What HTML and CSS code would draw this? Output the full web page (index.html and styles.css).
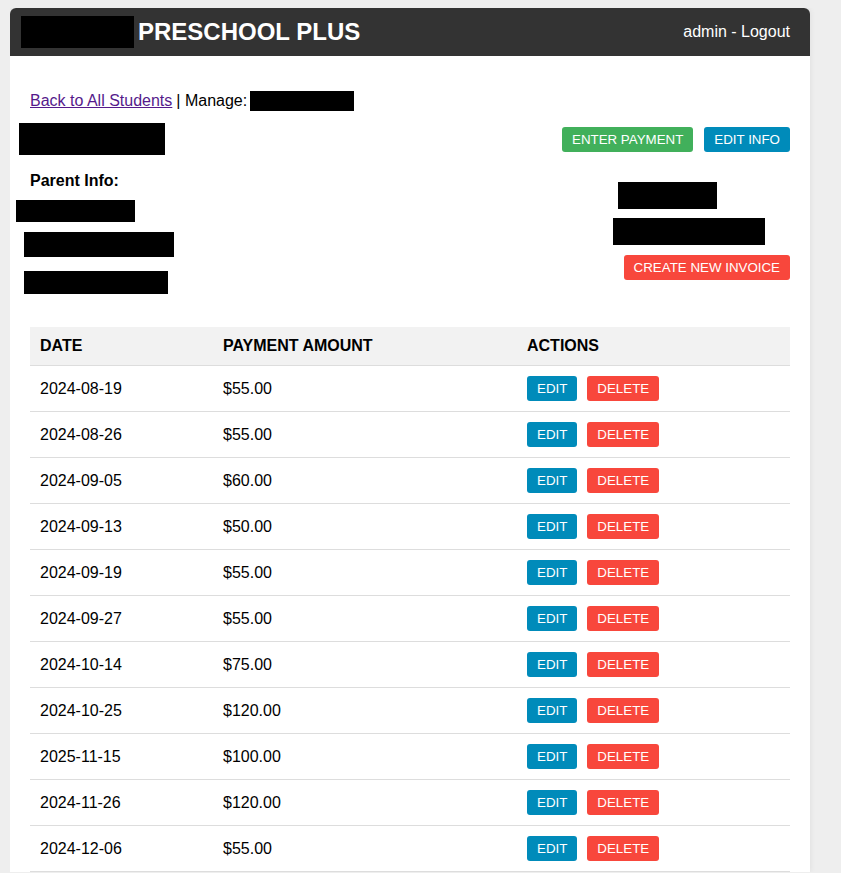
FILE: index.html
```html
<!DOCTYPE html>
<html lang="en">
<head>
<meta charset="utf-8">
<title>Preschool Plus - Manage Student</title>
<link rel="stylesheet" href="styles.css">
</head>
<body>
<div class="container">
  <header class="topbar">
    <h1 class="brand"><span class="redact brand-redact"></span>PRESCHOOL PLUS</h1>
    <div class="user">admin - <a class="logout" href="#">Logout</a></div>
  </header>
  <main class="content">
    <p class="nav"><a class="back" href="#">Back to All Students</a> | Manage: <span class="redact nav-redact"></span></p>
    <div class="name-row">
      <div class="redact name-redact"></div>
      <div class="btn-group">
        <button class="btn btn-green">ENTER PAYMENT</button>
        <button class="btn btn-blue">EDIT INFO</button>
      </div>
    </div>
    <div class="info">
      <div class="info-left">
        <p class="label">Parent Info:</p>
        <div class="redact pl1"></div>
        <div class="redact pl2"></div>
        <div class="redact pl3"></div>
      </div>
      <div class="info-right">
        <div class="redact pr1"></div>
        <div class="redact pr2"></div>
        <button class="btn btn-red invoice">CREATE NEW INVOICE</button>
      </div>
    </div>
    <table class="payments">
      <colgroup>
        <col class="c-date"><col class="c-amt"><col class="c-act">
      </colgroup>
      <thead>
        <tr><th>DATE</th><th>PAYMENT AMOUNT</th><th>ACTIONS</th></tr>
      </thead>
      <tbody>
        <tr><td>2024-08-19</td><td>$55.00</td><td><div class="actions"><button class="btn btn-blue">EDIT</button><button class="btn btn-red">DELETE</button></div></td></tr>
        <tr><td>2024-08-26</td><td>$55.00</td><td><div class="actions"><button class="btn btn-blue">EDIT</button><button class="btn btn-red">DELETE</button></div></td></tr>
        <tr><td>2024-09-05</td><td>$60.00</td><td><div class="actions"><button class="btn btn-blue">EDIT</button><button class="btn btn-red">DELETE</button></div></td></tr>
        <tr><td>2024-09-13</td><td>$50.00</td><td><div class="actions"><button class="btn btn-blue">EDIT</button><button class="btn btn-red">DELETE</button></div></td></tr>
        <tr><td>2024-09-19</td><td>$55.00</td><td><div class="actions"><button class="btn btn-blue">EDIT</button><button class="btn btn-red">DELETE</button></div></td></tr>
        <tr><td>2024-09-27</td><td>$55.00</td><td><div class="actions"><button class="btn btn-blue">EDIT</button><button class="btn btn-red">DELETE</button></div></td></tr>
        <tr><td>2024-10-14</td><td>$75.00</td><td><div class="actions"><button class="btn btn-blue">EDIT</button><button class="btn btn-red">DELETE</button></div></td></tr>
        <tr><td>2024-10-25</td><td>$120.00</td><td><div class="actions"><button class="btn btn-blue">EDIT</button><button class="btn btn-red">DELETE</button></div></td></tr>
        <tr><td>2025-11-15</td><td>$100.00</td><td><div class="actions"><button class="btn btn-blue">EDIT</button><button class="btn btn-red">DELETE</button></div></td></tr>
        <tr><td>2024-11-26</td><td>$120.00</td><td><div class="actions"><button class="btn btn-blue">EDIT</button><button class="btn btn-red">DELETE</button></div></td></tr>
        <tr><td>2024-12-06</td><td>$55.00</td><td><div class="actions"><button class="btn btn-blue">EDIT</button><button class="btn btn-red">DELETE</button></div></td></tr>
      </tbody>
    </table>
  </main>
</div>
</body>
</html>
```

FILE: styles.css
```css
html, body {
  background: #eeeeee;
}
body {
  margin: 8px 10px;
  font-family: "Liberation Sans", Arial, sans-serif;
  font-size: 16px;
  color: #000;
}
.container {
  width: 800px;
  background: #fff;
  border-radius: 6px 6px 0 0;
  box-shadow: 0 0 6px rgba(0, 0, 0, 0.08);
}
.topbar {
  height: 48px;
  background: #333333;
  border-radius: 6px 6px 0 0;
  display: flex;
  align-items: center;
  justify-content: space-between;
  padding: 0 20px 0 11px;
  color: #fff;
}
.brand {
  margin: 0;
  font-size: 24px;
  font-weight: bold;
  display: flex;
  align-items: center;
  gap: 4px;
}
.brand-redact {
  width: 113px;
  height: 32px;
}
.user {
  font-size: 16px;
  color: #fff;
}
.logout {
  color: #fff;
  text-decoration: none;
}
.redact {
  background: #000;
  display: block;
}
.content {
  padding: 20px 20px 0;
}
.nav {
  margin: 15px 0 0;
  line-height: 18px;
  display: flex;
  align-items: center;
}
.back {
  color: #551a8b;
  text-decoration: underline;
  margin-right: 4px;
}
.nav-redact {
  width: 104px;
  height: 20px;
  margin-left: 3px;
}
.name-row {
  margin-top: 12px;
  display: flex;
  align-items: center;
  justify-content: space-between;
}
.name-redact {
  width: 146px;
  height: 32px;
  margin-left: -11px;
}
.btn-group {
  display: flex;
  gap: 11px;
}
.btn {
  font-family: "Liberation Sans", Arial, sans-serif;
  font-size: 13.333px;
  line-height: 15px;
  padding: 5px 10px;
  border: none;
  border-radius: 3px;
  color: #fff;
  cursor: pointer;
}
.btn-green { background: #41b05b; }
.btn-blue { background: #008bba; }
.btn-red { background: #f8473c; }
.info {
  margin-top: 17px;
  display: flex;
  justify-content: space-between;
  align-items: flex-start;
}
.label {
  margin: 0;
  line-height: 18px;
  font-weight: bold;
}
.pl1 { width: 119px; height: 22px; margin: 10px 0 0 -14px; }
.pl2 { width: 150px; height: 25px; margin: 10px 0 0 -6px; }
.pl3 { width: 144px; height: 23px; margin: 14px 0 0 -6px; }
.info-right {
  margin-top: 10px;
  display: flex;
  flex-direction: column;
  align-items: flex-end;
}
.pr1 { width: 99px; height: 27px; margin-right: 73px; }
.pr2 { width: 152px; height: 27px; margin: 9px 25px 0 0; }
.invoice { margin-top: 10px; }
.payments {
  margin-top: 33px;
  width: 760px;
  border-collapse: collapse;
  table-layout: fixed;
}
.c-date { width: 183px; }
.c-amt { width: 304px; }
.c-act { width: 273px; }
.payments th,
.payments td {
  text-align: left;
  padding: 10px;
  border-bottom: 1px solid #dddddd;
  line-height: 18px;
  vertical-align: middle;
}
.payments th {
  background: #f2f2f2;
  font-weight: bold;
}
.actions {
  display: flex;
  gap: 10px;
}
```
